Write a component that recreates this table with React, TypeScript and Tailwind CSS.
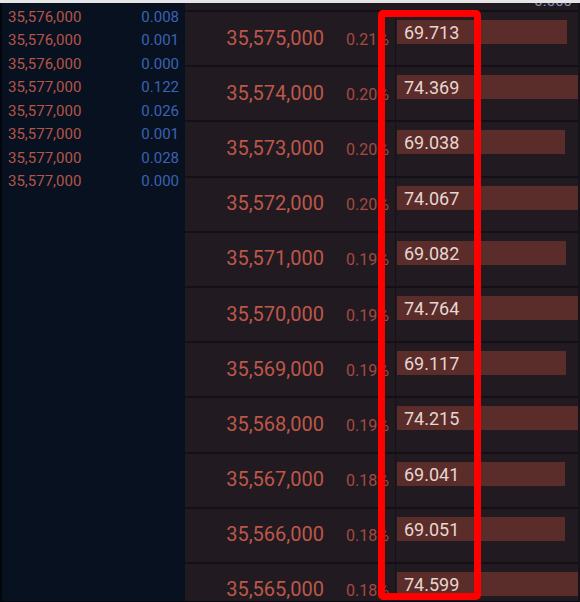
import React from "react";

const leftRows: [string, string][] = [
  ["35,576,000", "0.008"],
  ["35,576,000", "0.001"],
  ["35,576,000", "0.000"],
  ["35,577,000", "0.122"],
  ["35,577,000", "0.026"],
  ["35,577,000", "0.001"],
  ["35,577,000", "0.028"],
  ["35,577,000", "0.000"],
];

const rightRows: [string, string, string][] = [
  ["35,575,000", "0.21", "69.713"],
  ["35,574,000", "0.20", "74.369"],
  ["35,573,000", "0.20", "69.038"],
  ["35,572,000", "0.20", "74.067"],
  ["35,571,000", "0.19", "69.082"],
  ["35,570,000", "0.19", "74.764"],
  ["35,569,000", "0.19", "69.117"],
  ["35,568,000", "0.19", "74.215"],
  ["35,567,000", "0.18", "69.041"],
  ["35,566,000", "0.18", "69.051"],
  ["35,565,000", "0.18", "74.599"],
];

export default function App() {
  return (
    <div
      className="relative w-[580px] h-[602px] overflow-hidden bg-[#08111f] flex flex-col"
      style={{ fontFamily: "Roboto, 'Noto Sans', sans-serif" }}
    >
      <div className="h-[3px] bg-[#e6e6e6] shrink-0" />
      <div className="flex flex-1 min-h-0 border-l-2 border-r-2 border-b border-l-[#03070d] border-r-[#151317] border-b-[#05080e]">
        {/* Left trades panel */}
        <div className="w-[183px] shrink-0 bg-[#08111f] pt-[2px] pl-[6px] pr-[6px]">
          {leftRows.map(([p, q], i) => (
            <div key={i} className="h-[23.47px] flex items-center justify-between text-[15px] leading-[18px]">
              <span className="text-[#b5554a]">{p}</span>
              <span className="text-[#3b62b3]">{q}</span>
            </div>
          ))}
        </div>
        {/* Right order book panel */}
        <div className="flex-1 bg-[#221a21] flex flex-col overflow-hidden">
          <div className="h-[7px] shrink-0 overflow-hidden flex justify-end items-start pr-[6px]">
            <span className="-mt-[9px] text-[15px] leading-[15px] text-[#8496bd]">0.000</span>
          </div>
          {rightRows.map(([price, pct, vol], i) => {
            const w = (parseFloat(vol) / 75.0) * 183;
            return (
              <div key={i} className="h-[55.2px] shrink-0 border-t-2 border-[#151017] flex">
                <div className="w-[210px] shrink-0 flex items-center">
                  <div className="flex items-baseline">
                    <span className="w-[139px] text-right text-[20px] leading-[20px] text-[#bd5749]">{price}</span>
                    <span className="ml-[22px] text-[16px] leading-[20px] text-[#a44a41]">{pct}%</span>
                  </div>
                </div>
                <div className="flex-1 border-l-[1.5px] border-[#141119] pt-[8px] pl-[1px]">
                  <div
                    className="h-[24px] bg-[#5a2c2a] pl-[7px] pt-[2px] text-[18px] leading-[22px] text-[#e6d6d0]"
                    style={{ width: `${w}px` }}
                  >
                    {vol}
                  </div>
                </div>
              </div>
            );
          })}
        </div>
      </div>
      {/* Red highlight annotation */}
      <div className="absolute left-[378px] top-[10px] w-[103px] h-[590px] border-[7px] border-[#ff0000] rounded-[5px]" />
    </div>
  );
}
